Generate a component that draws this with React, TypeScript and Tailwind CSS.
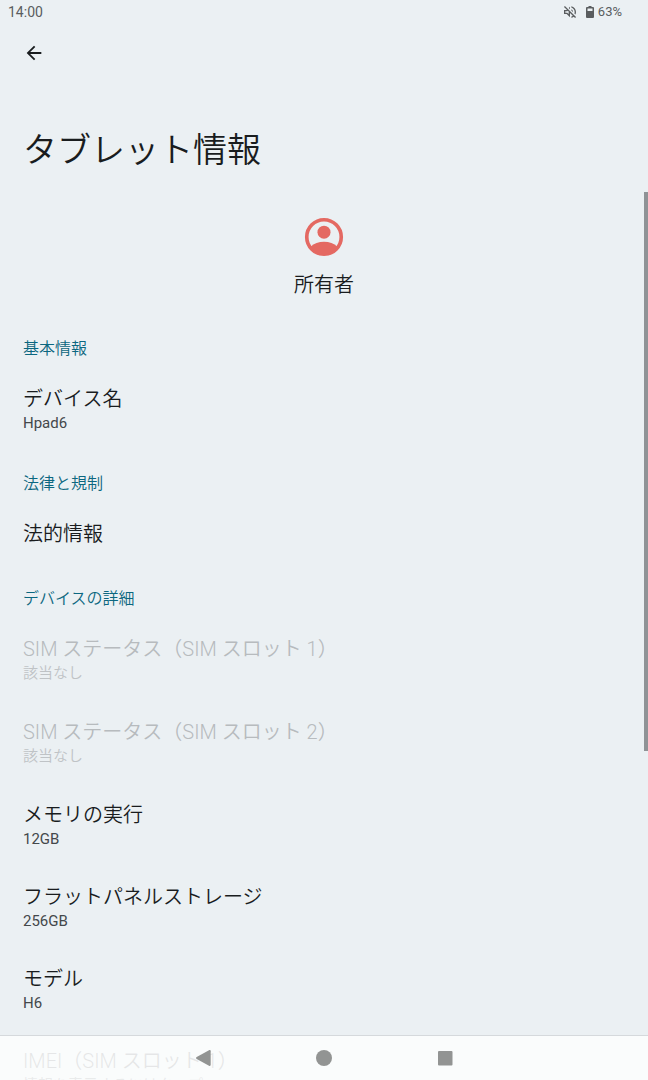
import React from 'react';
import { MdArrowBack } from 'react-icons/md';

interface DeviceItem {
  title: string;
  summary?: string;
  disabled?: boolean;
}

interface DeviceSection {
  heading: string;
  items: DeviceItem[];
}

const sections: DeviceSection[] = [
  {
    heading: '基本情報',
    items: [{ title: 'デバイス名', summary: 'Hpad6' }],
  },
  {
    heading: '法律と規制',
    items: [{ title: '法的情報' }],
  },
  {
    heading: 'デバイスの詳細',
    items: [
      { title: 'SIM ステータス（SIM スロット 1）', summary: '該当なし', disabled: true },
      { title: 'SIM ステータス（SIM スロット 2）', summary: '該当なし', disabled: true },
      { title: 'メモリの実行', summary: '12GB' },
      { title: 'フラットパネルストレージ', summary: '256GB' },
      { title: 'モデル', summary: 'H6' },
      { title: 'IMEI（SIM スロット 1）', summary: '情報を表示するにはタップ' },
    ],
  },
];

const StatusBar: React.FC = () => (
  <div className="flex h-6 items-center justify-between pl-2 pr-[26px] text-[#5a5d5f]">
    <span className="text-[14px]">14:00</span>
    <div className="flex items-center text-[13px]">
      <svg className="mr-2 h-4 w-4" viewBox="0 0 24 24" fill="currentColor" aria-label="ミュート">
        <path d="M4.34 2.93 2.93 4.34 7.29 8.7 7 9H3v6h4l5 5v-6.59l4.18 4.18c-.65.49-1.38.88-2.18 1.11v2.06a8.94 8.94 0 0 0 3.61-1.75l2.05 2.05 1.41-1.41L4.34 2.93zM10 15.17 7.83 13H5v-2h2.83l.88-.88L10 11.41v3.76zM19 12c0 .82-.15 1.61-.41 2.34l1.53 1.53c.56-1.17.88-2.48.88-3.87 0-4.28-2.99-7.86-7-8.77v2.06c2.89.86 5 3.54 5 6.71zm-7-8-1.88 1.88L12 7.76V4zm4.5 8A4.5 4.5 0 0 0 14 7.97v1.79l2.48 2.48c.01-.08.02-.16.02-.24z" />
      </svg>
      <svg className="mr-1 h-3 w-2" viewBox="0 0 8 12" aria-label="バッテリー">
        <path
          fill="currentColor"
          fillRule="evenodd"
          d="M2.500 0h3v1H7a1 1 0 0 1 1 1v9a1 1 0 0 1-1 1H1a1 1 0 0 1-1-1V2a1 1 0 0 1 1-1h1.500zM1.500 2.500v2.500h5V2.500z"
        />
      </svg>
      <span>63%</span>
    </div>
  </div>
);

const OwnerAvatar: React.FC = () => (
  <svg className="h-[46px] w-[46px] text-[#e46962]" viewBox="0 0 24 24" aria-hidden="true">
    <circle cx="12" cy="12" r="9" fill="none" stroke="currentColor" strokeWidth="1.900" />
    <circle cx="12" cy="9.500" r="3.400" fill="currentColor" />
    <path fill="currentColor" d="M5 17.100c1.700-1.700 4.300-2.600 7-2.600s5.300.9 7 2.600A9 9 0 0 1 12 21a9 9 0 0 1-7-3.900z" />
  </svg>
);

const ItemRow: React.FC<DeviceItem> = ({ title, summary, disabled }) => (
  <li>
    <button
      type="button"
      disabled={disabled}
      className={`block w-full px-[23px] py-[17px] text-left ${disabled ? 'text-[#b7bbbe]' : 'text-[#191c1e]'}`}
    >
      <span className="block text-xl font-[350] leading-7">{title}</span>
      {summary && (
        <span
          className={
            disabled
              ? 'block text-[15px] font-[350] leading-[21px] text-[#bfc3c6]'
              : 'block text-[15px] leading-[20px] text-[#44484b]'
          }
        >
          {summary}
        </span>
      )}
    </button>
  </li>
);

const NavigationBar: React.FC = () => (
  <nav className="absolute inset-x-0 bottom-0 flex h-[45px] items-center justify-center gap-[97px] border-t border-[#d5d9dc] bg-[#fcfdfd]/90 text-[#929493]">
    <button type="button" aria-label="戻る">
      <svg className="h-6 w-6" viewBox="0 0 24 24" fill="currentColor">
        <path d="M18 4.300c1-.5 1.700 0 1.700 1v13.400c0 1-.7 1.500-1.700 1L5.700 13c-.9-.5-.9-1.500 0-2z" />
      </svg>
    </button>
    <button type="button" aria-label="ホーム">
      <svg className="h-6 w-6" viewBox="0 0 24 24" fill="currentColor">
        <circle cx="12" cy="12" r="8" />
      </svg>
    </button>
    <button type="button" aria-label="最近使ったアプリ">
      <svg className="h-6 w-6" viewBox="0 0 24 24" fill="currentColor">
        <rect x="5" y="5" width="14.500" height="14.500" rx="1" />
      </svg>
    </button>
  </nav>
);

const App: React.FC = () => {
  return (
    <div
      lang="ja"
      className="relative flex h-screen flex-col overflow-hidden bg-[#ebf0f3] font-['Roboto','Noto_Sans_CJK_JP',sans-serif]"
    >
      <StatusBar />

      <header className="px-[23px]">
        <button type="button" aria-label="戻る" className="mt-[18px] block text-[#191c1e]">
          <MdArrowBack className="h-[22px] w-[22px]" />
        </button>
        <h1 className="mt-[61px] text-[34px] font-[350] leading-[50px] text-[#191c1e]">タブレット情報</h1>
      </header>

      <main className="min-h-0 flex-1 overflow-hidden pt-[39px]">
        <div className="flex flex-col items-center pb-[15px]">
          <OwnerAvatar />
          <p className="mt-[10px] text-xl font-[350] leading-[30px] text-[#191c1e]">所有者</p>
        </div>

        {sections.map((section) => (
          <section key={section.heading}>
            <h2 className="px-[23px] pb-[7px] pt-[22px] text-base font-[350] leading-6 text-[#0b6780]">
              {section.heading}
            </h2>
            <ul>
              {section.items.map((item) => (
                <ItemRow key={item.title} {...item} />
              ))}
            </ul>
          </section>
        ))}
      </main>

      {/* scroll position indicator */}
      <div className="absolute right-0 top-48 h-[559px] w-1 bg-[#8f9396]" />

      <NavigationBar />
    </div>
  );
};

export default App;
